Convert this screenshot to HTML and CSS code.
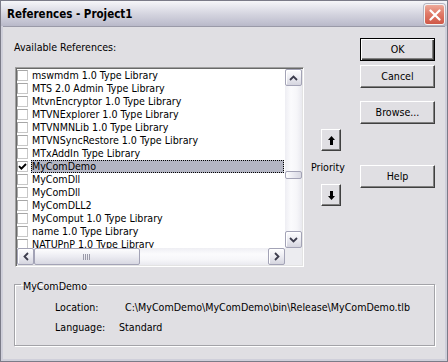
FILE: index.html
```html
<!DOCTYPE html>
<html>
<head>
<meta charset="utf-8">
<title>References - Project1</title>
<link rel="stylesheet" href="styles.css">
</head>
<body>
<div class="window">
  <div class="titlebar">
    <span class="title">References - Project1</span>
    <span class="close"><svg width="12" height="12" viewBox="0 0 12 12"><path d="M1.5 1.5 L10.5 10.5 M10.5 1.5 L1.5 10.5" stroke="#fff" stroke-width="2.2" stroke-linecap="round"/></svg></span>
  </div>
  <div class="client">
    <div class="top">
      <div class="left">
        <div class="label">Available References:</div>
        <div class="listbox">
          <div class="rows">
            <div class="row"><span class="cb"></span><span class="txt">mswmdm 1.0 Type Library</span></div>
            <div class="row"><span class="cb"></span><span class="txt">MTS 2.0 Admin Type Library</span></div>
            <div class="row"><span class="cb"></span><span class="txt">MtvnEncryptor 1.0 Type Library</span></div>
            <div class="row"><span class="cb"></span><span class="txt">MTVNExplorer 1.0 Type Library</span></div>
            <div class="row"><span class="cb"></span><span class="txt">MTVNMNLib 1.0 Type Library</span></div>
            <div class="row"><span class="cb"></span><span class="txt">MTVNSyncRestore 1.0 Type Library</span></div>
            <div class="row"><span class="cb"></span><span class="txt">MTxAddIn Type Library</span></div>
            <div class="row sel"><span class="cb"><svg width="9" height="9" viewBox="0 0 9 9"><path d="M1 4.2 L3.4 6.6 L8 2" fill="none" stroke="#000" stroke-width="1.9"/></svg></span><span class="txt">MyComDemo</span></div>
            <div class="row"><span class="cb"></span><span class="txt">MyComDll</span></div>
            <div class="row"><span class="cb"></span><span class="txt">MyComDll</span></div>
            <div class="row"><span class="cb"></span><span class="txt">MyComDLL2</span></div>
            <div class="row"><span class="cb"></span><span class="txt">MyComput 1.0 Type Library</span></div>
            <div class="row"><span class="cb"></span><span class="txt">name 1.0 Type Library</span></div>
            <div class="row"><span class="cb"></span><span class="txt">NATUPnP 1.0 Type Library</span></div>
          </div>
          <div class="vscroll">
            <span class="sbtn"><svg width="9" height="6" viewBox="0 0 9 6"><path d="M1 5 L4.5 1.5 L8 5" fill="none" stroke="#3c3c4c" stroke-width="1.8"/></svg></span>
            <span class="vspace"></span>
            <span class="vthumb"></span>
            <span class="vfill"></span>
            <span class="sbtn"><svg width="9" height="6" viewBox="0 0 9 6"><path d="M1 1 L4.5 4.5 L8 1" fill="none" stroke="#3c3c4c" stroke-width="1.8"/></svg></span>
          </div>
          <div class="hscroll">
            <span class="sbtn"><svg width="6" height="9" viewBox="0 0 6 9"><path d="M5 1 L1.5 4.5 L5 8" fill="none" stroke="#3c3c4c" stroke-width="1.8"/></svg></span>
            <span class="hthumb"><svg width="8" height="6" viewBox="0 0 8 6"><path d="M0.5 0 V6 M2.5 0 V6 M4.5 0 V6 M6.5 0 V6" stroke="#9a9aa8" stroke-width="1"/></svg></span>
            <span class="hfill"></span>
            <span class="sbtn"><svg width="6" height="9" viewBox="0 0 6 9"><path d="M1 1 L4.5 4.5 L1 8" fill="none" stroke="#3c3c4c" stroke-width="1.8"/></svg></span>
          </div>
          <div class="corner"></div>
        </div>
      </div>
      <div class="priority">
        <span class="btn arrow up"><svg width="7" height="9" viewBox="0 0 7 9"><path d="M3.5 0 L7 4 L5 4 L5 9 L2 9 L2 4 L0 4 Z" fill="#000"/></svg></span>
        <span class="plabel">Priority</span>
        <span class="btn arrow down"><svg width="7" height="9" viewBox="0 0 7 9"><path d="M3.5 9 L7 5 L5 5 L5 0 L2 0 L2 5 L0 5 Z" fill="#000"/></svg></span>
      </div>
      <div class="buttons">
        <span class="btn default">OK</span>
        <span class="btn cancel">Cancel</span>
        <span class="btn browse">Browse...</span>
        <span class="btn help">Help</span>
      </div>
    </div>
    <fieldset class="group">
      <legend>MyComDemo</legend>
      <div class="info first"><span class="key loc-key">Location:</span><span>C:\MyComDemo\MyComDemo\bin\Release\MyComDemo.tlb</span></div>
      <div class="info"><span class="key lang-key">Language:</span><span>Standard</span></div>
    </fieldset>
  </div>
</div>
</body>
</html>
```

FILE: styles.css
```css
html, body {
  margin: 0;
  padding: 0;
  background: #e0dfe3;
}
body {
  font-family: "DejaVu Sans Condensed", "Liberation Sans", sans-serif;
  font-size: 10.6px;
  line-height: 13px;
  color: #000;
}
.window {
  width: 448px;
  height: 362px;
  box-sizing: border-box;
  border: 1px solid #7b7b88;
  background: #cfcfda;
  display: flex;
  flex-direction: column;
}
.titlebar {
  height: 25px;
  flex: none;
  display: flex;
  align-items: center;
  padding: 0 2px 0 6px;
  background: linear-gradient(to bottom, #f6f6f9 0%, #e6e6ed 25%, #d3d3de 55%, #c2c2d1 85%, #b9b9c9 100%);
}
.title {
  font-weight: bold;
  font-size: 11.5px;
  color: #000;
  flex: 1;
  margin-top: 1px;
}
.close {
  width: 21px;
  height: 21px;
  box-sizing: border-box;
  border: 1px solid #f4f4f4;
  border-radius: 3px;
  background: linear-gradient(to bottom, #eeaa9a 0%, #e07a68 45%, #cf5847 100%);
  box-shadow: 0 0 0 1px #b4b4c0;
  display: flex;
  align-items: center;
  justify-content: center;
  margin-top: 2px;
}
.client {
  flex: 1;
  margin: 0 2px 2px;
  background: #e0dfe3;
  padding: 12px 10px 0 11px;
  box-shadow: inset 0 1px 0 #9a9aa8;
}
.top {
  display: flex;
  align-items: flex-start;
}
.left {
  width: 290px;
  display: flex;
  flex-direction: column;
}
.label {
  margin-top: 3px;
}
.listbox {
  margin-top: 13px;
  margin-left: 1px;
  width: 289px;
  height: 200px;
  box-sizing: border-box;
  border: 1px solid;
  border-color: #a0a0a0 #ffffff #ffffff #a0a0a0;
  box-shadow: inset 1px 1px 0 #696969, inset -1px -1px 0 #e3e3e3;
  padding: 1px;
  background: #fff;
  display: grid;
  grid-template-columns: 268px 17px;
  grid-template-rows: 179px 17px;
}
.rows {
  overflow: hidden;
  background: #fff;
}
.row {
  height: 13px;
  display: flex;
  align-items: flex-start;
  padding-right: 1px;
  white-space: nowrap;
}
.cb {
  width: 11px;
  height: 11px;
  box-sizing: border-box;
  margin-top: 1px;
  border: 1px solid #a6a6a6;
  border-right-color: #c8c8c8;
  border-bottom-color: #c8c8c8;
  background: #fff;
  display: flex;
  align-items: center;
  justify-content: center;
  flex: none;
}
.txt {
  flex: 1;
  margin-left: 3px;
  padding-left: 1px;
  height: 13px;
}
.sel .txt {
  background: #b3b5c3;
  outline: 1px dotted #000;
  outline-offset: -1px;
}
.vscroll {
  display: flex;
  flex-direction: column;
  background: linear-gradient(to right, #eeeef3, #fbfbfd 35%, #f6f6f9 70%, #e9e9ef);
}
.hscroll {
  display: flex;
  background: linear-gradient(to bottom, #eeeef3, #fbfbfd 35%, #f6f6f9 70%, #e9e9ef);
}
.sbtn {
  width: 17px;
  height: 17px;
  flex: none;
  box-sizing: border-box;
  border: 1px solid #a3a3b6;
  border-radius: 2px;
  background: linear-gradient(to bottom, #fdfdfe 0%, #ececf2 50%, #d5d5df 100%);
  box-shadow: inset 1px 1px 0 #ffffff;
  display: flex;
  align-items: center;
  justify-content: center;
}
.vspace {
  height: 85px;
  flex: none;
}
.vthumb {
  height: 8px;
  flex: none;
  box-sizing: border-box;
  border: 1px solid #a3a3b6;
  border-radius: 2px;
  background: linear-gradient(to right, #fdfdfe, #e6e6ee 60%, #d8d8e2);
}
.vfill, .hfill {
  flex: 1;
}
.hthumb {
  width: 106px;
  flex: none;
  box-sizing: border-box;
  border: 1px solid #a3a3b6;
  border-radius: 2px;
  background: linear-gradient(to bottom, #fdfdfe 0%, #ececf2 50%, #d8d8e2 100%);
  display: flex;
  align-items: center;
  justify-content: center;
}
.corner {
  background: #ececf0;
}
.btn {
  box-sizing: border-box;
  background: #e0dfe3;
  border: 1px solid;
  border-color: #ffffff #404040 #404040 #ffffff;
  box-shadow: inset -1px -1px 0 #808080;
  display: flex;
  align-items: center;
  justify-content: center;
  flex: none;
}
.priority {
  width: 34px;
  margin-left: 7px;
  display: flex;
  flex-direction: column;
  align-items: flex-start;
}
.arrow {
  width: 20px;
  height: 22px;
  margin-left: 10px;
}
.arrow.up {
  margin-top: 91px;
}
.plabel {
  margin-top: 10px;
}
.arrow.down {
  margin-top: 10px;
}
.buttons {
  width: 75px;
  margin-left: 15px;
  display: flex;
  flex-direction: column;
}
.buttons .btn {
  width: 75px;
  height: 23px;
}
.btn.default {
  border: 1px solid #000;
  box-shadow: inset 1px 1px 0 #ffffff, inset -1px -1px 0 #404040, inset -2px -2px 0 #808080;
}
.btn.cancel {
  margin-top: 4px;
}
.btn.browse {
  margin-top: 13px;
}
.btn.help {
  margin-top: 41px;
}
.group {
  margin: 9px 0 0;
  width: 421px;
  box-sizing: border-box;
  border: 1px solid #a3a3a8;
  box-shadow: inset 1px 1px 0 #ffffff, 1px 1px 0 #ffffff;
  padding: 0 0 11px 0;
}
.group legend {
  margin-left: 6px;
  padding: 4px 2px 0;
  line-height: 13px;
}
.info {
  display: flex;
  margin-top: 7px;
  margin-left: 40px;
  white-space: nowrap;
}
.info.first {
  margin-top: 8px;
}
.loc-key {
  width: 70px;
}
.lang-key {
  width: 64px;
}
```
